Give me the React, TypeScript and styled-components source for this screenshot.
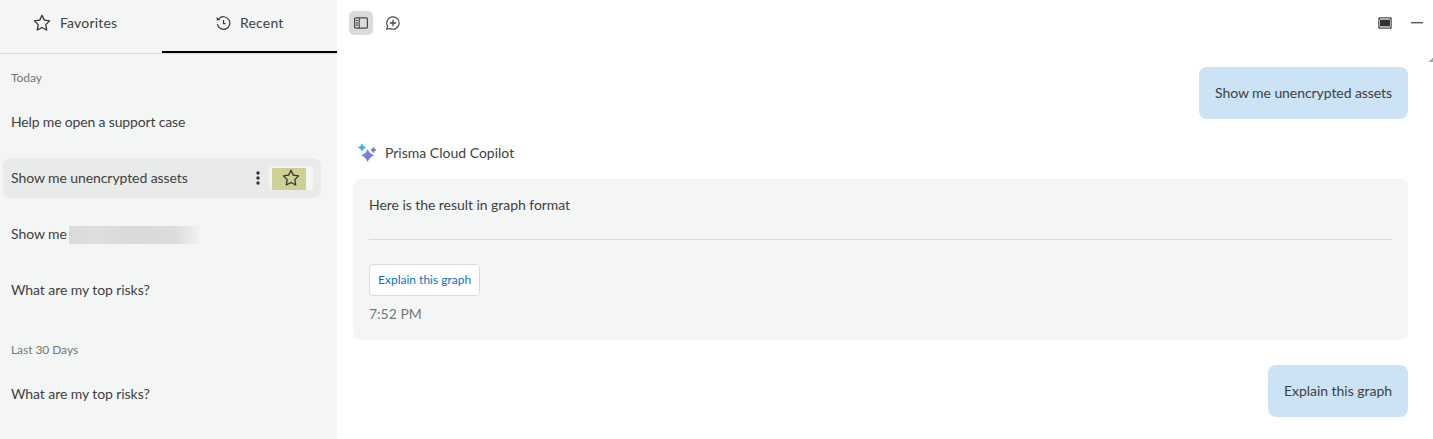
import React from 'react';
import styled, { createGlobalStyle } from 'styled-components';

const GlobalStyle = createGlobalStyle`
  *, *::before, *::after { box-sizing: border-box; }
  body {
    margin: 0;
    background: #fff;
    color: #404141;
    font: 14px/20px Lato, "Liberation Sans", sans-serif;
    overflow: hidden;
  }
  button { font: inherit; color: inherit; border: 0; padding: 0; background: none; }
  svg { display: block; flex: none; }
`;

const Shell = styled.div`
  display: flex;
  height: 439px;
  overflow: hidden;
`;

const Sidebar = styled.aside`
  flex: 0 0 337px;
  background: #f4f6f5;
`;

const Tabs = styled.div`
  display: flex;
  height: 54px;
  border-bottom: 1px solid #dadcdb;
`;

const Tab = styled.button<{ $width: number; $inset: number; $active?: boolean }>`
  flex: 0 0 ${p => p.$width}px;
  display: flex;
  align-items: center;
  gap: 9px;
  height: 53px;
  padding: 0 0 6px ${p => p.$inset}px;
  border-bottom: 2px solid ${p => (p.$active ? '#000' : 'transparent')};
  letter-spacing: 0.18px;
`;

const History = styled.div`
  padding: 14px 16px 0 3px;
`;

const GroupLabel = styled.h2<{ $spaced?: boolean }>`
  margin: ${p => (p.$spaced ? 30 : 0)}px 0 14px;
  padding-left: 8px;
  font-size: 12px;
  font-weight: 400;
  line-height: 20px;
  letter-spacing: -0.06px;
  color: #757676;
`;

const Rows = styled.div`
  display: flex;
  flex-direction: column;
  gap: 16px;
`;

const Row = styled.div<{ $active?: boolean; $tracking?: number }>`
  display: flex;
  align-items: center;
  height: 40px;
  padding: 0 8px;
  border-radius: 8px;
  letter-spacing: ${p => p.$tracking ?? -0.08}px;
  background: ${p => (p.$active ? '#e9ebea' : 'transparent')};
`;

const RowActions = styled.div`
  display: flex;
  align-items: center;
  gap: 9px;
  margin-left: auto;
`;

const FavoriteButton = styled.button`
  width: 44px;
  height: 24px;
  padding: 2px 7px 0 3px;
  border-radius: 4px;
  background: #f4f6f5;
`;

const Highlight = styled.span`
  display: flex;
  align-items: center;
  justify-content: center;
  padding: 0 0 2px 4px;
  height: 22px;
  background: #cfd093;
`;

const Redacted = styled.span`
  width: 130px;
  height: 18px;
  margin: 2px 0 0 2.5px;
  background: linear-gradient(90deg, #d9dad9 0, #dddedd 18%, #d8d9d8 50%, #dbdcdb 82%, #e6e8e7 91%, #eff1f0 100%);
`;

const Main = styled.main`
  flex: 1;
  min-width: 0;
  position: relative;
`;

const Toolbar = styled.header`
  display: flex;
  align-items: center;
  height: 46px;
  padding: 0 10px 0 12px;
`;

const ToolButton = styled.button<{ $active?: boolean }>`
  display: flex;
  align-items: center;
  justify-content: center;
  width: 24px;
  height: 24px;
  margin-right: 8px;
  border-radius: 5px;
  background: ${p => (p.$active ? '#dadcdb' : 'transparent')};
`;

const WindowControls = styled.div`
  display: flex;
  align-items: center;
  gap: 19px;
  margin-left: auto;
`;

const Conversation = styled.section`
  display: flex;
  flex-direction: column;
  padding: 21px 25px 0 16px;
`;

const UserMessage = styled.p<{ $tracking?: number }>`
  align-self: flex-end;
  margin: 0;
  padding: 16px;
  border-radius: 8px;
  letter-spacing: ${p => p.$tracking ?? -0.07}px;
  background: #cce2f5;
`;

const Author = styled.div`
  display: flex;
  align-items: center;
  gap: 8.5px;
  height: 20px;
  margin: 24px 0 16px;
  padding-left: 3.5px;
`;

const Answer = styled.article`
  height: 161px;
  margin-bottom: 25px;
  padding: 16px;
  border-radius: 8px;
  background: #f4f6f5;
`;

const AnswerText = styled.p`
  margin: 0;
  padding-bottom: 24px;
  border-bottom: 1px solid #dadcdb;
  letter-spacing: -0.05px;
`;

const Suggestion = styled.button`
  display: block;
  height: 32px;
  margin-top: 24px;
  padding: 0 8px;
  border: 1px solid #dadcdb;
  border-radius: 4px;
  background: #fff;
  color: #0474cc;
  font-size: 12px;
`;

const Time = styled.time`
  display: block;
  margin-top: 8px;
  color: #757676;
`;

const ScrollCaret = styled.span`
  position: absolute;
  top: 58px;
  right: 0;
  width: 4px;
  height: 4px;
  background: linear-gradient(135deg, transparent 45%, #a8a8a8 45%);
`;

const StarIcon = () => (
  <svg width="18" height="18" viewBox="0 0 18 18" fill="none" stroke="#333" strokeWidth="1.3" strokeLinejoin="round">
    <path d="M9 1.3 11.3 6.1 16.6 6.9 12.8 10.6 13.7 16 9 13.5 4.3 16 5.2 10.6 1.4 6.9 6.7 6.1Z" />
  </svg>
);

const HistoryIcon = () => (
  <svg width="16" height="16" viewBox="0 0 16 16" fill="none" stroke="#3a3a3a" strokeWidth="1.25">
    <path d="M4 3.6A6.3 6.3 0 1 1 2.3 9.2" />
    <path d="M8.5 5V8.5H10.6" />
    <path d="M1.5 2 1.9 5.6 5.3 4.8Z" fill="#333" stroke="none" />
  </svg>
);

const MoreIcon = () => (
  <svg width="4" height="14" viewBox="0 0 4 14" fill="#333">
    <circle cx="2" cy="2" r="1.7" />
    <circle cx="2" cy="7" r="1.7" />
    <circle cx="2" cy="12" r="1.7" />
  </svg>
);

const PanelIcon = () => (
  <svg width="14" height="12" viewBox="0 0 14 12" fill="none" stroke="#4a4a4a" strokeWidth="1.2">
    <rect x=".6" y=".9" width="12.8" height="10.2" rx="1" />
    <path d="M5.2 .9V11.1M1.8 3.5H3.9M1.8 5.8H3.9M1.8 8.1H3.9" />
  </svg>
);

const NewChatIcon = () => (
  <svg width="14" height="14" viewBox="0 0 14 14" fill="none" stroke="#444" strokeWidth="1.15">
    <path d="M.7 13.3 1.5 10A6.2 6.2 0 1 1 4 12.5Z" strokeLinejoin="round" />
    <path d="M3.8 7H10.2M7 3.8V10.2" strokeWidth="1.3" />
  </svg>
);

const FullscreenIcon = () => (
  <svg width="14" height="12" viewBox="0 0 14 12">
    <rect x=".5" y=".5" width="13" height="11" rx="1" fill="#aaa" stroke="#777" />
    <rect x="2" y="3" width="10" height="6" fill="#333" />
    <path d="M1 1h1v1H1zM12 1h1v1h-1zM1 10h1v1H1zM12 10h1v1h-1z" fill="#222" />
  </svg>
);

const MinimizeIcon = () => (
  <svg width="12" height="2" viewBox="0 0 12 2">
    <path d="M0 0H12V1H0Z" fill="#555" />
    <path d="M0 1H12V2H0Z" fill="#bbb" />
  </svg>
);

const SparkleIcon = () => (
  <svg width="20" height="20" viewBox="0 0 20 20">
    <defs>
      <linearGradient id="sparkle" gradientUnits="userSpaceOnUse" x1="3" y1="2" x2="15" y2="18">
        <stop offset="0" stopColor="#36c5de" />
        <stop offset=".5" stopColor="#6791dc" />
        <stop offset="1" stopColor="#985be0" />
      </linearGradient>
    </defs>
    <g fill="url(#sparkle)">
      <path d="M5 .2Q6 3.5 9.2 4.5 6 5.5 5 8.8 4 5.5 .8 4.5 4 3.5 5 .2Z" />
      <path d="M10.6 6Q12.4 10.7 17 12.4 12.4 14.1 10.6 19 8.8 14.1 4.2 12.4 8.8 10.7 10.6 6Z" />
    </g>
    <path d="M16.4 3.8Q17.2 6.2 19.5 6.9 17.2 7.6 16.4 10 15.6 7.6 13.3 6.9 15.6 6.2 16.4 3.8Z" fill="#7b6ddd" />
  </svg>
);

export default function App() {
  return (
    <Shell>
      <GlobalStyle />
      <Sidebar>
        <Tabs>
          <Tab $width={162} $inset={33}><StarIcon />Favorites</Tab>
          <Tab $width={175} $inset={53} $active><HistoryIcon />Recent</Tab>
        </Tabs>
        <History>
          <GroupLabel>Today</GroupLabel>
          <Rows>
            <Row $tracking={-0.16}>Help me open a support case</Row>
            <Row $active>
              Show me unencrypted assets
              <RowActions>
                <MoreIcon />
                <FavoriteButton aria-label="Favorite"><Highlight><StarIcon /></Highlight></FavoriteButton>
              </RowActions>
            </Row>
            <Row>Show me<Redacted /></Row>
            <Row>What are my top risks?</Row>
          </Rows>
          <GroupLabel $spaced>Last 30 Days</GroupLabel>
          <Rows>
            <Row>What are my top risks?</Row>
          </Rows>
        </History>
      </Sidebar>
      <Main>
        <Toolbar>
          <ToolButton $active aria-label="Toggle history"><PanelIcon /></ToolButton>
          <ToolButton aria-label="New chat"><NewChatIcon /></ToolButton>
          <WindowControls>
            <FullscreenIcon />
            <MinimizeIcon />
          </WindowControls>
        </Toolbar>
        <Conversation>
          <UserMessage>Show me unencrypted assets</UserMessage>
          <Author><SparkleIcon />Prisma Cloud Copilot</Author>
          <Answer>
            <AnswerText>Here is the result in graph format</AnswerText>
            <Suggestion>Explain this graph</Suggestion>
            <Time>7:52 PM</Time>
          </Answer>
          <UserMessage $tracking={-0.03}>Explain this graph</UserMessage>
        </Conversation>
        <ScrollCaret />
      </Main>
    </Shell>
  );
}
